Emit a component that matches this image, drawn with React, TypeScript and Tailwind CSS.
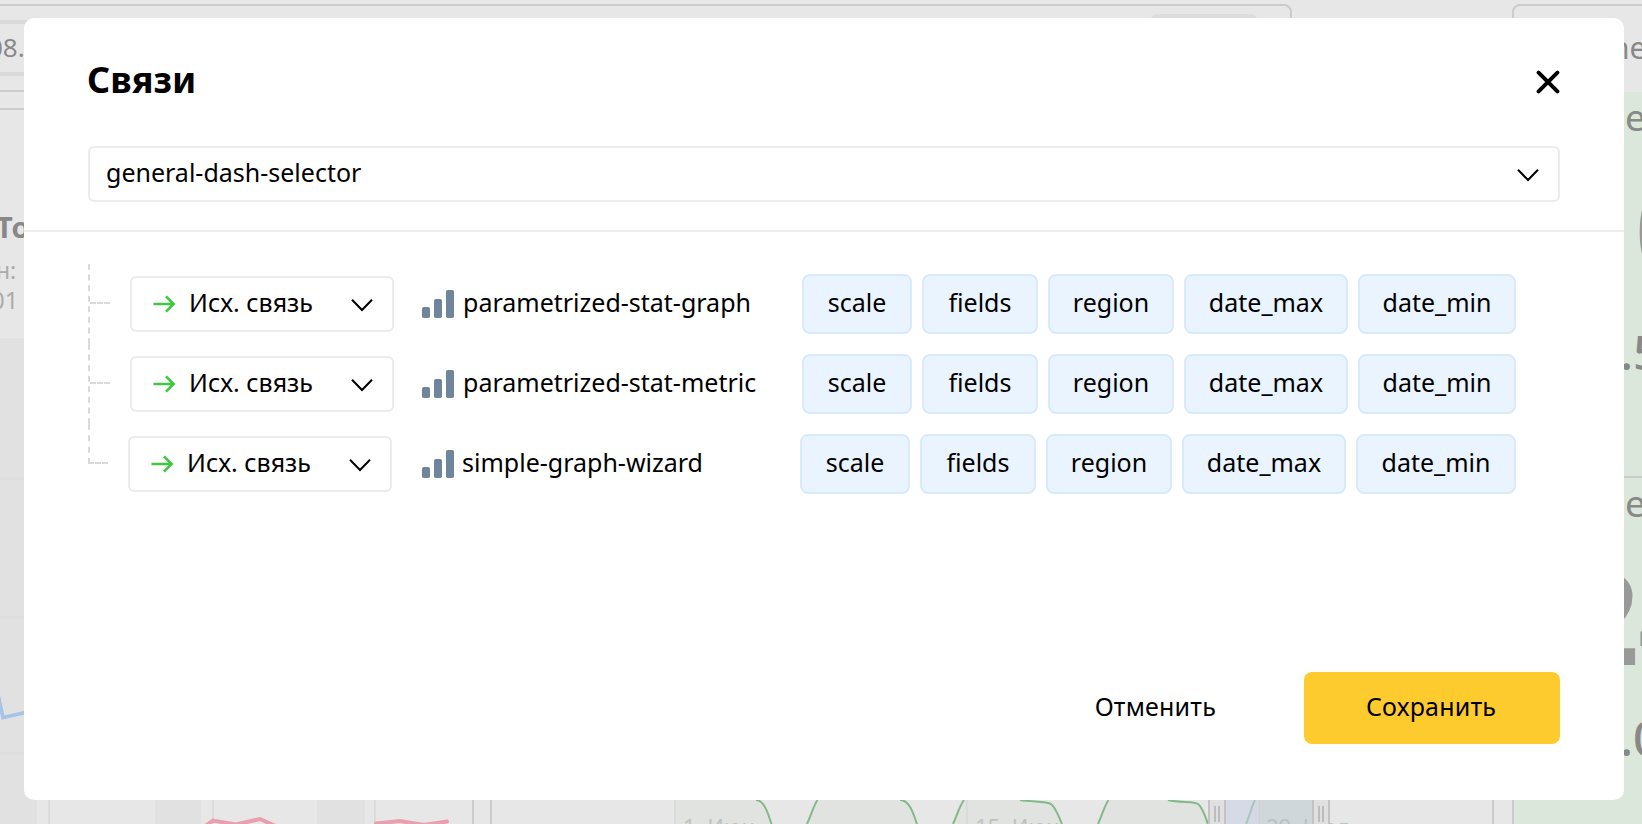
import type { ReactNode } from "react";

type Link = { name: string; params: string[] };

const PARAMS = ["scale", "fields", "region", "date_max", "date_min"];

const LINKS: Link[] = [
  { name: "parametrized-stat-graph", params: PARAMS },
  { name: "parametrized-stat-metric", params: PARAMS },
  { name: "simple-graph-wizard", params: PARAMS },
];

const CHIP_WIDTHS: Record<string, string> = {
  scale: "w-[110px]",
  fields: "w-[116px]",
  region: "w-[126px]",
  date_max: "w-[164px]",
  date_min: "w-[158px]",
};

function Chevron() {
  return (
    <svg width="24" height="14" viewBox="0 0 24 14" fill="none" className="block shrink-0">
      <path d="M2 1.8 12 12 22 1.8" stroke="#000" strokeWidth="2" />
    </svg>
  );
}

function ArrowRight() {
  return (
    <svg width="24" height="20" viewBox="0 0 24 20" fill="none" className="block shrink-0">
      <path d="M.5 10H20.5M13 2.4 20.6 10l-7.6 7.6" stroke="#3ec93f" strokeWidth="2.6" />
    </svg>
  );
}

function BarsIcon() {
  return (
    <svg width="32" height="28" viewBox="0 0 32 28" fill="#6f859b" className="block shrink-0">
      <rect x="0" y="17" width="8" height="11" rx="1.8" />
      <rect x="12" y="9" width="8" height="19" rx="1.8" />
      <rect x="24" y="0" width="8" height="28" rx="1.8" />
    </svg>
  );
}

function CloseIcon() {
  return (
    <svg width="24" height="24" viewBox="0 0 24 24" fill="none" className="block">
      <path d="M2.6 2.6 21.4 21.4M21.4 2.6 2.6 21.4" stroke="#000" strokeWidth="4" strokeLinecap="round" />
    </svg>
  );
}

function Chip({ label, last }: { label: string; last: boolean }) {
  const width = last && label === "date_min" ? "w-[160px]" : CHIP_WIDTHS[label];
  return (
    <span
      className={`flex h-[60px] ${width} items-center justify-center rounded-lg border-2 border-[#d9eafc] bg-[#eaf4fe] pb-0.5`}
    >
      {label}
    </span>
  );
}

function LinkRow({ link, last }: { link: Link; last: boolean }) {
  return (
    <li className="flex h-20">
      {last ? (
        <div className="h-10 w-5 shrink-0 border-b-2 border-l-2 border-dashed border-[#d9d9d9]" />
      ) : (
        <div className="h-20 w-[22px] shrink-0 border-l-2 border-dashed border-[#d9d9d9] pt-[38px]">
          <div className="border-t-2 border-dashed border-[#d9d9d9]" />
        </div>
      )}
      <button
        className={`mt-3 ml-5 flex h-14 w-[264px] shrink-0 items-center rounded-md border-2 border-[#ececec] bg-white ${last ? "mr-[30px]" : "mr-7"}`}
      >
        <span className="ml-[21px]">
          <ArrowRight />
        </span>
        <span className="ml-3 grow pb-0.5 text-left">Исх. связь</span>
        <span className="mr-[18px] pt-0.5">
          <Chevron />
        </span>
      </button>
      <div className={`flex h-20 shrink-0 ${last ? "w-[378px]" : "w-[380px]"}`}>
        <span className="mt-[26px]">
          <BarsIcon />
        </span>
        <span className={`mt-5 leading-9 ${last ? "ml-2" : "ml-[9px]"}`}>{link.name}</span>
      </div>
      <div className="mt-2.5 flex gap-2.5">
        {link.params.map((p) => (
          <Chip key={p} label={p} last={last} />
        ))}
      </div>
    </li>
  );
}

function Metric({ value, delta, indent }: { value: string; delta: string; indent: string }) {
  return (
    <div className="h-[384px] bg-[#dbe7da] pt-[7px] whitespace-nowrap text-[#888]">
      <div className="h-9 pl-[111px] text-[37px] leading-9">e</div>
      <div className={`h-[187px] ${indent} text-[130px] leading-[187px] font-bold text-[#999]`}>{value}</div>
      <div className="h-[59px] pl-[106px] text-5xl leading-[59px] font-medium">{delta}</div>
    </div>
  );
}

function Panel({ className, children }: { className: string; children?: ReactNode }) {
  return <div className={`overflow-hidden border-2 border-[#cbcbcb] ${className}`}>{children}</div>;
}

function VisitsChart() {
  return (
    <svg width="472" height="486" viewBox="0 338 472 486" fill="none" className="block">
      <path d="M0 338H37V824H0zM155 338H201V824H155zM317 338H365V824H317z" fill="#e1e1e1" />
      <path d="M0 479H472M0 617H472M0 753H472M49 753V824M213 753V824M375 753V824" stroke="#dcdcdc" strokeWidth="2" />
      <path d="M-3 690 3 717.5 50 707" stroke="#a6c4e5" strokeWidth="3.6" />
      <path d="M201 829 213 820.5 236 824.5 260 819 280 828M376 823.5 400 821 424 825 447 821.5" stroke="#e89fae" strokeWidth="4" strokeLinecap="round" />
    </svg>
  );
}

function NavigatorChart() {
  return (
    <svg width="1002" height="24" viewBox="492 800 1002 24" fill="none" className="block">
      <path
        d="M675 800H757C764 800 768 812 772 824H807L817 800H900C909 800 912 812 917 824H953L964 800H1021C1053 801 1051 801 1062 824H1098L1108 800H1169C1200 803 1198 801 1208 824H1246L1255 800H1313V824H675z"
        fill="#e0e3df"
      />
      <path d="M675 800V824M967 800V824M1259 800V824" stroke="#d9dbd9" strokeWidth="2" />
      <g fontFamily="'Noto Sans', sans-serif" fontSize="22" fill="#c0c2c0">
        <text x="683" y="835">1. Июн</text>
        <text x="975" y="835">15. Июн</text>
        <text x="1266" y="835">29. Июл</text>
      </g>
      <path
        d="M756 800C764 800 768 813 771.5 824M807 824C811 815 814 805 817.5 800M900 800C909 800 913 812 917 824M953 824C957 815 960 805 964 800M1020 800C1032 802 1047 801 1051 804 1056 808 1059 817 1062 824M1098 824C1102 815 1105 805 1108.5 800M1168 800C1180 803 1194 801 1198 804 1203 808 1205 816 1208 824M1246 824C1250 815 1252 805 1255 800"
        stroke="#83b987"
        strokeWidth="2"
      />
      <rect x="1225" y="800" width="34" height="24" fill="#c8cfe6" fillOpacity=".55" />
      <rect x="1259" y="800" width="54" height="24" fill="#a9b8d0" fillOpacity=".28" />
      <path d="M1210 800H1224V824H1210zM1314 800H1328V824H1314z" fill="#e0e0e0" />
      <path d="M1209 800V824M1225 800V824M1313 800V824M1329 800V824" stroke="#c3c3c3" strokeWidth="2" />
      <path d="M1215 806V822M1219 806V822M1319 806V822M1323 806V822" stroke="#bcbcbc" strokeWidth="2" />
    </svg>
  );
}

function Dashboard() {
  return (
    <div className="flex h-full gap-[18px] bg-[#e7e7e7] pt-1">
      <div className="flex w-[1494px] shrink-0 flex-col gap-4">
        <Panel className="flex h-[88px] w-[1292px] shrink-0 justify-between rounded-tr-lg border-l-0">
          <div className="mt-3.5 h-14 w-40 border-y-4 border-[#dadada] text-[26px] leading-[46px] text-[#888]">
            <div className="-ml-[12px]">08.</div>
          </div>
          <div className="mt-2 mr-8 h-14 w-[108px] rounded-lg bg-[#dcdcdc]" />
        </Panel>
        <div className="flex grow gap-4">
          <Panel className="w-[474px] shrink-0 border-b-0 border-l-0">
            <div className="h-[228px] pt-[99px] whitespace-nowrap">
              <div className="-ml-[4px] h-9 text-[29px] leading-9 font-bold text-[#888]">То</div>
              <div className="mt-[10px] -ml-[4px] h-[30px] text-[23px] leading-[30px] text-[#ababab]">н:</div>
              <div className="-ml-[9px] h-[30px] text-[24px] leading-[30px] text-[#ababab]">01</div>
            </div>
            <VisitsChart />
          </Panel>
          <Panel className="flex grow flex-col justify-end border-b-0">
            <NavigatorChart />
          </Panel>
        </div>
      </div>
      <Panel className="w-[300px] shrink-0 rounded-tl-lg border-b-0">
        <div className="flex h-[86px] items-center pb-[3px] pl-[97px] text-3xl whitespace-nowrap text-[#888]">ne</div>
        <Metric value="0" delta=".5" indent="pl-[121px]" />
        <div className="h-0.5 bg-[#cbcbcb]" />
        <Metric value="24" delta=".0" indent="pl-[51px] tracking-[-1px]" />
      </Panel>
    </div>
  );
}

function LinksDialog() {
  return (
    <section className="flex h-[782px] w-[1600px] flex-col rounded-[10px] bg-white text-[25px] text-black">
      <header className="border-b-2 border-[#ececec] px-16 pt-10 pb-7">
        <div className="flex h-11 justify-between">
          <h1 className="-ml-px text-4xl leading-[44px] font-bold">Связи</h1>
          <button className="mt-3 h-6" aria-label="Закрыть">
            <CloseIcon />
          </button>
        </div>
        <button className="mt-11 flex h-14 w-full items-center justify-between rounded-md border-2 border-[#ececec] pr-[18px] pl-4">
          <span className="pb-0.5">general-dash-selector</span>
          <span className="pt-0.5">
            <Chevron />
          </span>
        </button>
      </header>
      <ul className="grow px-16 pt-8">
        {LINKS.map((link, i) => (
          <LinkRow key={link.name} link={link} last={i === LINKS.length - 1} />
        ))}
      </ul>
      <footer className="flex justify-end px-16 pb-14">
        <button className="h-[72px] px-[88px] pb-0.5 tracking-[0.2px]">Отменить</button>
        <button className="h-[72px] w-64 rounded-lg bg-[#fecb2f] pr-0.5 pb-0.5 tracking-[0.2px]">Сохранить</button>
      </footer>
    </section>
  );
}

export default function App() {
  return (
    <main className="relative h-[824px] w-[1642px] overflow-hidden font-['Noto_Sans',sans-serif]">
      <Dashboard />
      <div className="absolute inset-0 flex justify-start pt-[18px] pl-6">
        <LinksDialog />
      </div>
    </main>
  );
}
